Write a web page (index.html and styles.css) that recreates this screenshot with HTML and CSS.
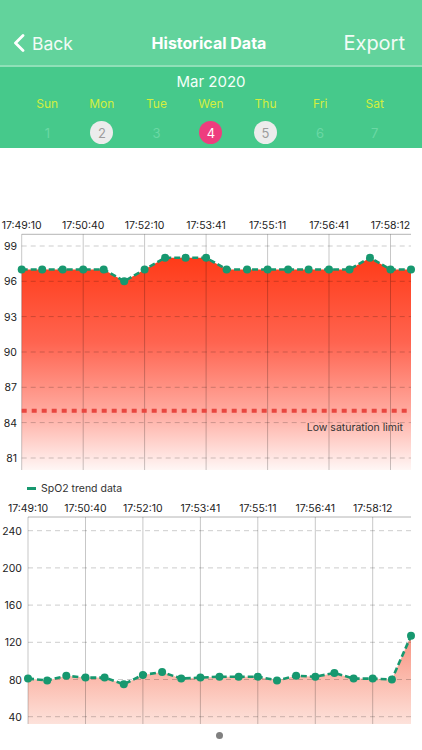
FILE: index.html
```html
<!DOCTYPE html>
<html>
<head>
<meta charset="utf-8">
<link rel="stylesheet" href="styles.css">
</head>
<body>
<header class="topbar">
  <nav class="nav">
    <a class="back"><svg class="chev" width="12" height="18" viewBox="0 0 12 18"><path d="M10 1.5 L2.5 9 L10 16.5" fill="none" stroke="#fff" stroke-width="2.8" stroke-linecap="round" stroke-linejoin="round"/></svg>Back</a>
    <h1 class="title">Historical Data</h1>
    <a class="export">Export</a>
  </nav>
</header>
<section class="calendar">
  <div class="month">Mar 2020</div>
  <div class="week">
    <div class="day"><span class="dname">Sun</span><span class="dnum">1</span></div>
    <div class="day"><span class="dname">Mon</span><span class="dnum has">2</span></div>
    <div class="day"><span class="dname">Tue</span><span class="dnum">3</span></div>
    <div class="day"><span class="dname">Wen</span><span class="dnum sel">4</span></div>
    <div class="day"><span class="dname">Thu</span><span class="dnum has">5</span></div>
    <div class="day"><span class="dname">Fri</span><span class="dnum">6</span></div>
    <div class="day"><span class="dname">Sat</span><span class="dnum">7</span></div>
  </div>
</section>

<section class="chart">
<svg class="chart-svg" width="422" height="330" viewBox="0 148 422 330">
  <defs>
    <linearGradient id="g1" gradientUnits="userSpaceOnUse" x1="0" y1="256" x2="0" y2="472">
      <stop offset="0" stop-color="#ff3a17"/>
      <stop offset="0.4" stop-color="#ff6450"/>
      <stop offset="0.72" stop-color="#ffaa9f"/>
      <stop offset="1" stop-color="#fff9f8"/>
    </linearGradient>
  </defs>
  <g class="tick">
    <text x="21.7" y="228.5">17:49:10</text>
    <text x="83.2" y="228.5">17:50:40</text>
    <text x="144.6" y="228.5">17:52:10</text>
    <text x="206.1" y="228.5">17:53:41</text>
    <text x="267.6" y="228.5">17:55:11</text>
    <text x="329.0" y="228.5">17:56:41</text>
    <text x="390.5" y="228.5">17:58:12</text>
  </g>
  <path class="area1" d="M21.7,269.5 L42.2,269.5 L62.7,269.5 L83.2,269.5 L103.7,269.5 L124.2,281.3 L144.6,269.5 L165.1,257.7 L185.6,257.7 L206.1,257.7 L226.6,269.5 L247.1,269.5 L267.6,269.5 L288.1,269.5 L308.6,269.5 L329.0,269.5 L349.5,269.5 L370.0,257.7 L390.5,269.5 L411.0,269.5 L411,470 L21.7,470 Z" fill="url(#g1)"/>
  <line class="axis" x1="21.7" y1="234.3" x2="411" y2="234.3"/>
  <g class="vgrid">
    <line x1="21.7" y1="234.3" x2="21.7" y2="470"/>
    <line x1="83.2" y1="234.3" x2="83.2" y2="470"/>
    <line x1="144.6" y1="234.3" x2="144.6" y2="470"/>
    <line x1="206.1" y1="234.3" x2="206.1" y2="470"/>
    <line x1="267.6" y1="234.3" x2="267.6" y2="470"/>
    <line x1="329.0" y1="234.3" x2="329.0" y2="470"/>
    <line x1="390.5" y1="234.3" x2="390.5" y2="470"/>
  </g>
  <g class="hgrid">
    <line x1="21.7" y1="246" x2="411" y2="246"/>
    <line x1="21.7" y1="281.3" x2="411" y2="281.3"/>
    <line x1="21.7" y1="316.6" x2="411" y2="316.6"/>
    <line x1="21.7" y1="352" x2="411" y2="352"/>
    <line x1="21.7" y1="387.3" x2="411" y2="387.3"/>
    <line x1="21.7" y1="422.6" x2="411" y2="422.6"/>
    <line x1="21.7" y1="458" x2="411" y2="458"/>
  </g>
  <g class="ylab">
    <text x="17" y="250">99</text>
    <text x="17" y="285.3">96</text>
    <text x="17" y="320.6">93</text>
    <text x="17" y="356">90</text>
    <text x="17" y="391.3">87</text>
    <text x="17" y="426.6">84</text>
    <text x="17" y="462">81</text>
  </g>
  <line class="limit" x1="21.7" y1="410.8" x2="411" y2="410.8"/>
  <text class="limit-text" x="403" y="430.5">Low saturation limit</text>
  <path class="trend" d="M21.7,269.5 L42.2,269.5 L62.7,269.5 L83.2,269.5 L103.7,269.5 L124.2,281.3 L144.6,269.5 L165.1,257.7 L185.6,257.7 L206.1,257.7 L226.6,269.5 L247.1,269.5 L267.6,269.5 L288.1,269.5 L308.6,269.5 L329.0,269.5 L349.5,269.5 L370.0,257.7 L390.5,269.5 L411.0,269.5"/>
  <g class="dots">
    <circle cx="21.7" cy="269.5" r="4"/><circle cx="42.2" cy="269.5" r="4"/><circle cx="62.7" cy="269.5" r="4"/><circle cx="83.2" cy="269.5" r="4"/><circle cx="103.7" cy="269.5" r="4"/><circle cx="124.2" cy="281.3" r="4"/><circle cx="144.6" cy="269.5" r="4"/><circle cx="165.1" cy="257.7" r="4"/><circle cx="185.6" cy="257.7" r="4"/><circle cx="206.1" cy="257.7" r="4"/><circle cx="226.6" cy="269.5" r="4"/><circle cx="247.1" cy="269.5" r="4"/><circle cx="267.6" cy="269.5" r="4"/><circle cx="288.1" cy="269.5" r="4"/><circle cx="308.6" cy="269.5" r="4"/><circle cx="329.0" cy="269.5" r="4"/><circle cx="349.5" cy="269.5" r="4"/><circle cx="370.0" cy="257.7" r="4"/><circle cx="390.5" cy="269.5" r="4"/><circle cx="411.0" cy="269.5" r="4"/>
  </g>
</svg>
</section>

<div class="legend"><span class="swatch"></span><span class="legend-label">SpO2 trend data</span></div>

<section class="chart">
<svg class="chart-svg" width="422" height="230" viewBox="0 498 422 230">
  <defs>
    <linearGradient id="g2" gradientUnits="userSpaceOnUse" x1="0" y1="630" x2="0" y2="725">
      <stop offset="0" stop-color="#f78d7b"/>
      <stop offset="0.5" stop-color="#fbb9ab"/>
      <stop offset="1" stop-color="#fde3dc"/>
    </linearGradient>
  </defs>
  <g class="tick">
    <text x="28" y="511.5">17:49:10</text>
    <text x="85.5" y="511.5">17:50:40</text>
    <text x="142.9" y="511.5">17:52:10</text>
    <text x="200.4" y="511.5">17:53:41</text>
    <text x="257.8" y="511.5">17:55:11</text>
    <text x="315.3" y="511.5">17:56:41</text>
    <text x="372.7" y="511.5">17:58:12</text>
  </g>
  <path d="M28.0,678.6 L47.2,680.4 L66.3,675.8 L85.5,677.6 L104.6,677.6 L123.8,684.2 L142.9,674.9 L162.1,672.1 L181.2,678.6 L200.4,677.6 L219.5,676.7 L238.7,676.7 L257.8,676.7 L277.0,680.4 L296.1,675.8 L315.3,676.7 L334.4,673.0 L353.6,678.6 L372.7,678.6 L391.9,679.5 L411.0,635.8 L411,724 L28,724 Z" fill="url(#g2)"/>
  <line class="axis" x1="28" y1="517" x2="411" y2="517"/>
  <g class="vgrid">
    <line x1="28" y1="517" x2="28" y2="724"/>
    <line x1="85.5" y1="517" x2="85.5" y2="724"/>
    <line x1="142.9" y1="517" x2="142.9" y2="724"/>
    <line x1="200.4" y1="517" x2="200.4" y2="724"/>
    <line x1="257.8" y1="517" x2="257.8" y2="724"/>
    <line x1="315.3" y1="517" x2="315.3" y2="724"/>
    <line x1="372.7" y1="517" x2="372.7" y2="724"/>
  </g>
  <g class="hgrid">
    <line x1="28" y1="530.7" x2="411" y2="530.7"/>
    <line x1="28" y1="567.9" x2="411" y2="567.9"/>
    <line x1="28" y1="605.1" x2="411" y2="605.1"/>
    <line x1="28" y1="642.3" x2="411" y2="642.3"/>
    <line x1="28" y1="679.5" x2="411" y2="679.5"/>
    <line x1="28" y1="716.7" x2="411" y2="716.7"/>
  </g>
  <g class="ylab">
    <text x="22" y="534.7">240</text>
    <text x="22" y="571.9">200</text>
    <text x="22" y="609.1">160</text>
    <text x="22" y="646.3">120</text>
    <text x="22" y="683.5">80</text>
    <text x="22" y="720.7">40</text>
  </g>
  <path class="trend" d="M28.0,678.6 L47.2,680.4 L66.3,675.8 L85.5,677.6 L104.6,677.6 L123.8,684.2 L142.9,674.9 L162.1,672.1 L181.2,678.6 L200.4,677.6 L219.5,676.7 L238.7,676.7 L257.8,676.7 L277.0,680.4 L296.1,675.8 L315.3,676.7 L334.4,673.0 L353.6,678.6 L372.7,678.6 L391.9,679.5 L411.0,635.8"/>
  <g class="dots">
    <circle cx="28.0" cy="678.6" r="4"/><circle cx="47.2" cy="680.4" r="4"/><circle cx="66.3" cy="675.8" r="4"/><circle cx="85.5" cy="677.6" r="4"/><circle cx="104.6" cy="677.6" r="4"/><circle cx="123.8" cy="684.2" r="4"/><circle cx="142.9" cy="674.9" r="4"/><circle cx="162.1" cy="672.1" r="4"/><circle cx="181.2" cy="678.6" r="4"/><circle cx="200.4" cy="677.6" r="4"/><circle cx="219.5" cy="676.7" r="4"/><circle cx="238.7" cy="676.7" r="4"/><circle cx="257.8" cy="676.7" r="4"/><circle cx="277.0" cy="680.4" r="4"/><circle cx="296.1" cy="675.8" r="4"/><circle cx="315.3" cy="676.7" r="4"/><circle cx="334.4" cy="673.0" r="4"/><circle cx="353.6" cy="678.6" r="4"/><circle cx="372.7" cy="678.6" r="4"/><circle cx="391.9" cy="679.5" r="4"/><circle cx="411.0" cy="635.8" r="4"/>
  </g>
</svg>
</section>

<div class="pager"><span class="pdot"></span></div>
</body>
</html>
```

FILE: styles.css
```css
* { box-sizing: border-box; }
html, body { margin: 0; padding: 0; }
body {
  width: 422px;
  height: 750px;
  overflow: hidden;
  background: #ffffff;
  font-family: Inter, "Noto Sans", "Liberation Sans", sans-serif;
  color: #222;
}

.topbar {
  height: 67px;
  background: #62d39c;
  border-bottom: 2px solid #8fe0b8;
  padding-top: 20px;
}
.nav {
  height: 46px;
  display: grid;
  grid-template-columns: 1fr auto 1fr;
  align-items: center;
  padding: 0 17px 0 13px;
}
.back {
  display: flex;
  align-items: center;
  gap: 7px;
  color: #f2fbf6;
  font-size: 17.5px;
  justify-self: start;
}
.chev { display: block; }
.title {
  margin: 0;
  font-size: 16px;
  font-weight: 700;
  color: #ffffff;
}
.export {
  justify-self: end;
  font-size: 20px;
  color: #f2fbf6;
}

.calendar {
  height: 81px;
  background: #46c98b;
  padding-top: 5px;
}
.month {
  text-align: center;
  font-size: 15px;
  line-height: 20px;
  color: #f4fff9;
}
.week {
  display: grid;
  grid-template-columns: repeat(7, 1fr);
  padding: 0 20px;
  margin-top: 3px;
}
.day {
  display: flex;
  flex-direction: column;
  align-items: center;
}
.dname {
  font-size: 12px;
  line-height: 18px;
  color: #d3ef3e;
}
.dnum {
  margin-top: 8px;
  width: 23px;
  height: 23px;
  border-radius: 50%;
  display: flex;
  align-items: center;
  justify-content: center;
  font-size: 13px;
  color: #6ad8a4;
}
.dnum.has { background: #ececec; color: #9c9c9c; }
.dnum.sel { background: #ee3d7e; color: #ffffff; }

.chart { display: block; }
.chart-svg { display: block; }
.tick text {
  font-size: 10.5px;
  fill: #222;
  text-anchor: middle;
}
.ylab text {
  font-size: 10.5px;
  fill: #222;
  text-anchor: end;
}
.axis { stroke: #b4b4b4; stroke-width: 1; }
.vgrid line { stroke: rgba(0,0,0,0.22); stroke-width: 1; }
.hgrid line { stroke: rgba(0,0,0,0.2); stroke-width: 1; stroke-dasharray: 5 4; }
.limit { stroke: #e8463f; stroke-width: 4; stroke-dasharray: 5 5; }
.limit-text { font-size: 10.5px; fill: #333; text-anchor: end; }
.trend { fill: none; stroke: #17986f; stroke-width: 2.6; stroke-dasharray: 6 3; }
.dots circle { fill: #17986f; }

.legend {
  height: 20px;
  display: flex;
  align-items: center;
  padding-left: 27px;
  gap: 5px;
}
.swatch {
  width: 9px;
  height: 3px;
  background: #17986f;
}
.legend-label {
  font-size: 10.5px;
  color: #333;
}

.pager {
  height: 22px;
  display: flex;
  justify-content: center;
  padding-top: 3.5px;
  padding-left: 16px;
}
.pdot {
  width: 7px;
  height: 7px;
  border-radius: 50%;
  background: #808080;
}
```
